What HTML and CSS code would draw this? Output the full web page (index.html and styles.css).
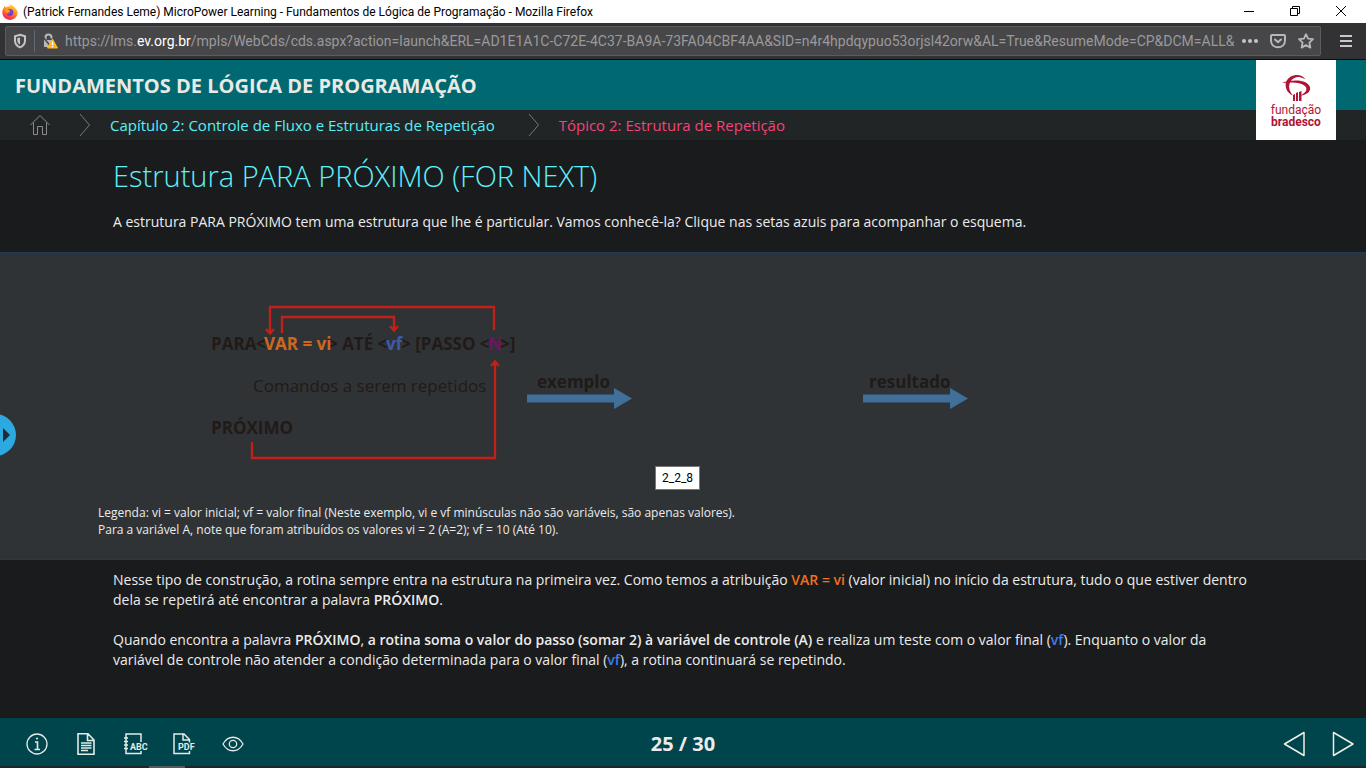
FILE: index.html
```html
<!DOCTYPE html>
<html lang="pt-BR">
<head>
<meta charset="utf-8">
<meta name="viewport" content="width=device-width, initial-scale=1">
<title>Fundamentos de Lógica de Programação</title>
<link rel="stylesheet" href="styles.css">
</head>
<body>
<div class="titlebar">
  <svg class="firefox" viewBox="0 0 16 16" aria-hidden="true">
    <defs>
      <linearGradient id="flame" x1="0.8" y1="0" x2="0.3" y2="1"><stop offset="0" stop-color="#ffe03a"/><stop offset=".4" stop-color="#ff9a1f"/><stop offset=".75" stop-color="#ff4a3d"/><stop offset="1" stop-color="#e3236f"/></linearGradient>
    </defs>
    <path d="M8 2.2 9 0.3C10 2 12 2.6 13.4 4.2 15 5.8 15.9 7.4 15.6 9.6 15 13.4 12 15.9 8.2 15.9 4 15.9 .5 13 .3 8.8.2 6.8.8 5 1.8 3.9L2.3 1.8 3.8 3.4C5 2.6 6.500 2.200 8 2.200Z" fill="url(#flame)"/>
    <path d="M5 6.200C6 4.800 8.500 4.500 10 5.600 12 7 11.900 10.200 9.800 11.500 7.800 12.600 5.300 11.800 4.600 10.200L7.500 8.600 8.300 7.300Z" fill="#7b3fd0"/>
    <path d="M3.200 5.400C5 4.500 6 5.800 7.900 6.100 7.700 7.700 5.800 7.400 5.300 9 4 8.500 3.100 7 3.200 5.400Z" fill="#ff9d25"/>
  </svg>
  <span class="window-title">(Patrick Fernandes Leme) MicroPower Learning - Fundamentos de Lógica de Programação - Mozilla Firefox</span>
  <div class="window-controls">
    <button type="button" aria-label="Minimizar"><svg viewBox="0 0 12 12"><path d="M1 6.500H11"/></svg></button>
    <button type="button" aria-label="Restaurar"><svg viewBox="0 0 12 12"><path d="M1.500 3.500H8.500V10.500H1.500ZM3.500 3.500V1.500H10.500V8.500H8.500"/></svg></button>
    <button type="button" aria-label="Fechar"><svg viewBox="0 0 12 12"><path d="M1 1 11 11M11 1 1 11"/></svg></button>
  </div>
</div>

<div class="toolbar">
  <div class="address">
    <button type="button" class="tool shield" aria-label="Proteção"><svg viewBox="0 0 16 16"><path d="M8 1.800 13 3.200V7.500C13 11 10.800 13.300 8 14.400 5.200 13.300 3 11 3 7.500V3.200Z" fill="none" stroke="#c4c4c6" stroke-width="2"/><path d="M8 4.500V11.800C6.300 10.900 5.300 9.400 5.300 7.500V5.100Z" fill="#c4c4c6"/></svg></button>
    <button type="button" class="tool lock" aria-label="Conexão"><svg viewBox="0 0 16 16"><path d="M3.500 8V4.500C3.500 .5 9.500 .5 9.500 4.500V5.500" fill="none" stroke="#b8b8ba" stroke-width="2"/><path d="M2 7H11V14H2Z" fill="#b8b8ba"/><path d="M1 4 10 15" stroke="#474749" stroke-width="1.500"/><path d="M10.500 6 15.500 15H5.500Z" fill="#ffb51c" stroke="#ffb51c" stroke-linejoin="round"/><path d="M10.500 8.500V12M10.500 13V14.300" stroke="#fff" stroke-width="1.400"/></svg></button>
    <div class="url" role="textbox" aria-label="Endereço" contenteditable="true" spellcheck="false">https://lms.<b>ev.org.br</b>/mpls/WebCds/cds.aspx?action=launch&amp;ERL=AD1E1A1C-C72E-4C37-BA9A-73FA04CBF4AA&amp;SID=n4r4hpdqypuo53orjsl42orw&amp;AL=True&amp;ResumeMode=CP&amp;DCM=ALL&amp;</div>
    <button type="button" class="tool" aria-label="Ações da página"><svg viewBox="0 0 16 16" fill="#c4c4c6"><circle cx="2" cy="8" r="2"/><circle cx="8" cy="8" r="2"/><circle cx="14" cy="8" r="2"/></svg></button>
    <button type="button" class="tool" aria-label="Pocket"><svg viewBox="0 0 16 16" fill="none" stroke="#b8b8ba" stroke-width="2" stroke-linecap="round" stroke-linejoin="round"><path d="M2 2H14Q15 2 15 3V7.500C15 16.500 1 16.500 1 7.500V3Q1 2 2 2Z"/><path d="M5 6.500 8 9.300 11 6.500"/></svg></button>
    <button type="button" class="tool" aria-label="Favorito"><svg viewBox="0 0 16 16" fill="none" stroke="#b8b8ba" stroke-width="1.800" stroke-linejoin="round"><path d="M8 1.200 10.100 5.700 15 6.200 11.400 9.600 12.400 14.600 8 12.100 3.600 14.600 4.600 9.600 1 6.200 5.900 5.700Z"/></svg></button>
  </div>
  <button type="button" class="tool menu" aria-label="Menu"><svg viewBox="0 0 16 16" stroke="#c8c8ca" stroke-width="2"><path d="M2 3H14M2 8H14M2 13H14"/></svg></button>
</div>

<header class="course">
  <h1>FUNDAMENTOS DE LÓGICA DE PROGRAMAÇÃO</h1>
  <div class="brand">
    <svg viewBox="0 0 30 28" aria-hidden="true">
      <path d="M24.500 5.500C20-1.500 9 0 5.500 7 3 13 6 19 12 21.500 8 17 7 12 9.500 7.500 13 2 19 1.500 24.500 5.500Z" fill="#b01335"/>
      <path d="M1 9C12 5 25 6 28.500 12 31 17 26 21 19.500 21.500 24 19 27 16 24.500 12.500 20 8 10 8 1 9Z" fill="#b01335"/>
      <path d="M12 27V21L14 20V27ZM15 27V19L17 18V27ZM18 27V18L20.500 17V27Z" fill="#b01335"/>
    </svg>
    <span>fundação</span><strong>bradesco</strong>
  </div>
</header>

<nav class="crumbs" aria-label="Navegação">
  <a href="#" class="home" aria-label="Início"><svg viewBox="0 0 20 22" fill="none" stroke="#8b8c8c"><path d="M.5 11 10 1.500 19.500 11M3.500 8.500V20.500H7.500V12.500H12.500V20.500H16.500V8.500"/></svg></a>
  <svg class="chevron" viewBox="0 0 12 22" fill="none" stroke="#777979"><path d="M0 0 9.500 11 0 22"/></svg>
  <a href="#" class="chapter">Capítulo 2: Controle de Fluxo e Estruturas de Repetição</a>
  <svg class="chevron second" viewBox="0 0 12 22" fill="none" stroke="#777979"><path d="M0 0 9.500 11 0 22"/></svg>
  <a href="#" class="topic" aria-current="page">Tópico 2: Estrutura de Repetição</a>
</nav>

<main>
  <section class="intro">
    <h2>Estrutura PARA PRÓXIMO (FOR NEXT)</h2>
    <p>A estrutura PARA PRÓXIMO tem uma estrutura que lhe é particular. Vamos conhecê-la? Clique nas setas azuis para acompanhar o esquema.</p>
  </section>

  <section class="stage">
    <div class="scheme">
      <svg class="loop" viewBox="0 0 316 170" role="img" aria-label="Esquema da estrutura PARA PRÓXIMO">
        <g class="code">
          <text x="0" y="50">PARA&lt;</text>
          <text x="117" y="50">&gt; ATÉ &lt;</text>
          <text x="190" y="50">&gt; [PASSO &lt;</text>
          <text x="289" y="50">&gt;]</text>
          <text x="53" y="50" class="orange">VAR = vi</text>
          <text x="175" y="50" class="blue">vf</text>
          <text x="277" y="50" class="purple">N</text>
          <text x="42" y="92" class="plain">Comandos a serem repetidos</text>
          <text x="0" y="134">PRÓXIMO</text>
        </g>
        <g fill="none" stroke="#c32017" stroke-width="2.300">
          <path d="M283 30V7H59V33M55 29 59 33.500 63 29"/>
          <path d="M71 33V17H183V31M179 26 183 30.500 187 26"/>
          <path d="M41 142V158H284V62M280 66 284 61.500 288 66"/>
        </g>
      </svg>
      <button type="button" class="step">
        <span>exemplo</span>
        <svg viewBox="0 0 105 21"><path d="M0 6.500H87V0L105 10.500 87 21V14.500H0Z" fill="#406f99"/></svg>
      </button>
      <button type="button" class="step result">
        <span>resultado</span>
        <svg viewBox="0 0 105 21"><path d="M0 6.500H87V0L105 10.500 87 21V14.500H0Z" fill="#406f99"/></svg>
      </button>
    </div>
    <p class="legend">Legenda: vi = valor inicial; vf = valor final (Neste exemplo, vi e vf minúsculas não são variáveis, são apenas valores).<br>Para a variável A, note que foram atribuídos os valores vi = 2 (A=2); vf = 10 (Até 10).</p>
    <button type="button" class="drawer" aria-label="Abrir menu"><svg viewBox="0 0 7 14"><path d="M0 0 7 7 0 14Z" fill="#1f2b35"/></svg></button>
    <div class="tooltip" role="tooltip">2_2_8</div>
  </section>

  <section class="explain">
    <p>Nesse tipo de construção, a rotina sempre entra na estrutura na primeira vez. Como temos a atribuição <b class="orange">VAR = vi</b> (valor inicial) no início da estrutura, tudo o que estiver dentro dela se repetirá até encontrar a palavra <b>PRÓXIMO</b>.</p>
    <p>Quando encontra a palavra <b>PRÓXIMO</b>, <b>a rotina soma o valor do passo (somar 2) à variável de controle (A)</b> e realiza um teste com o valor final (<b class="blue">vf</b>). Enquanto o valor da variável de controle não atender a condição determinada para o valor final (<b class="blue">vf</b>), a rotina continuará se repetindo.</p>
  </section>
</main>

<footer class="player">
  <div class="tools">
    <button type="button" aria-label="Informações"><svg viewBox="0 0 22 22" fill="none" stroke="#e3ebe9" stroke-width="1.300"><circle cx="11" cy="11" r="10"/><path d="M9 9H11.500V16M8.500 16.500H14M10 5.500H12" stroke-width="1.600"/></svg></button>
    <button type="button" aria-label="Texto"><svg viewBox="0 0 22 22" fill="none" stroke="#e3ebe9" stroke-width="1.600"><path d="M3 .700H13L19 7V21.300H3ZM12.500 .700V7.500H19M6 10H16.500M6 12.500H16.500M6 15H16.500M6 17.500H13"/></svg></button>
    <button type="button" aria-label="Glossário"><svg viewBox="0 0 22 22" fill="none" stroke="#e3ebe9" stroke-width="1.500"><path d="M17 9V1H2V20.500H17V18M0 5H4M0 8.500H4M0 12H4M0 15.500H4"/><text x="6" y="17" class="tag">ABC</text></svg></button>
    <button type="button" aria-label="PDF"><svg viewBox="0 0 22 22" fill="none" stroke="#e3ebe9" stroke-width="1.500"><path d="M16.500 9.500V6.500L11 1H1V20.500H16.500V18M10 1V7H16.500"/><text x="5" y="17" class="tag">PDF</text></svg></button>
    <button type="button" aria-label="Visualizar"><svg viewBox="0 0 22 22" fill="none" stroke="#e3ebe9" stroke-width="1.300"><path d="M1 11C6 2 16 2 21 11 16 20 6 20 1 11Z"/><circle cx="11" cy="11" r="3.700"/></svg></button>
  </div>
  <div class="count">25 / 30</div>
  <div class="pager">
    <button type="button" aria-label="Anterior"><svg viewBox="0 0 22 26" fill="none" stroke="#f0f0e8" stroke-width="1.500" stroke-linejoin="round"><path d="M21 1.500V24.500L1.500 13Z"/></svg></button>
    <button type="button" aria-label="Próximo"><svg viewBox="0 0 22 26" fill="none" stroke="#f0f0e8" stroke-width="1.500" stroke-linejoin="round"><path d="M1.500 1.500V24.500L21 13Z"/></svg></button>
  </div>
</footer>
<div class="strip"></div>
</body>
</html>
```
FILE: styles.css
```css
* { box-sizing: border-box; }
body {
  margin: 0;
  min-height: 100vh;
  display: flex;
  flex-direction: column;
  background: #1a1b1c;
  color: #ececec;
  font-family: "Open Sans", "Noto Sans", sans-serif;
}
button { padding: 0; border: 0; background: none; color: inherit; font: inherit; }
svg { display: block; overflow: visible; }
p, h1, h2 { margin: 0; }
a { text-decoration: none; }

.titlebar {
  height: 23px;
  display: flex;
  align-items: center;
  gap: 5px;
  padding: 0 2px;
  background: #fff;
  color: #000;
}
.firefox { width: 16px; height: 16px; }
.window-title { flex: 1; font: 12px/16px Roboto, sans-serif; white-space: nowrap; }
.window-controls { display: flex; margin-bottom: 2px; }
.window-controls button { width: 46px; display: grid; place-items: center; }
.window-controls svg { width: 12px; height: 12px; fill: none; stroke: #000; }

.toolbar {
  height: 37px;
  display: flex;
  align-items: center;
  gap: 17px;
  padding: 0 11px 0 5px;
  background: #323234;
  border-bottom: 1px solid #0c0c0d;
}
.address {
  flex: 1;
  min-width: 0;
  height: 30px;
  display: flex;
  align-items: center;
  gap: 12px;
  padding: 0 6px;
  background: #474749;
  border: 1px solid #5c5c5e;
  border-radius: 2px;
}
.tool { width: 16px; height: 16px; flex: none; }
.tool svg { width: 16px; height: 16px; }
.shield { margin-right: -6px; }
.shield + .lock { height: 22px; width: 24px; padding-left: 7px; border-left: 1px solid #5e6a77; }
.lock { display: grid; align-items: center; }
.url {
  flex: 1;
  min-width: 0;
  margin: 0 -6px 0 -5px;
  overflow: hidden;
  white-space: nowrap;
  color: #9a9a9c;
  font: 14px/20px Roboto, sans-serif;
}
.url b { color: #fff; font-weight: 400; }
.menu { margin-right: 1px; }

.course {
  position: relative;
  height: 50px;
  display: flex;
  align-items: center;
  padding: 2px 15px 0;
  background: #006870;
}
.course h1 { font-size: 20px; line-height: 28px; font-weight: 700; color: #e9e9e6; }
.brand {
  position: absolute;
  z-index: 1;
  top: 0;
  right: 30px;
  width: 80px;
  height: 80px;
  padding-top: 14px;
  background: #fff;
  color: #b01335;
  font: 12px/12px Roboto, sans-serif;
  text-align: center;
}
.brand svg { width: 30px; height: 28px; margin: 0 auto 2px; }
.brand span, .brand strong { display: block; }

.crumbs {
  height: 30px;
  display: flex;
  align-items: center;
  padding-left: 30px;
  background: #222526;
  font-size: 15px;
  line-height: 20px;
}
.home svg { width: 20px; height: 22px; }
.chevron { width: 12px; height: 22px; margin: 0 18px 0 30px; }
.second { margin-left: 34px; }
.chapter { color: #57f0fa; }
.topic { color: #f0447a; }

main { flex: 1; }
.intro { height: 112px; padding: 16px 113px 0; }
.intro h2 { font-size: 29px; line-height: 40px; font-weight: 300; color: #5ff1fb; }
.intro p, .explain { font-size: 14px; line-height: 20px; }
.intro p { margin-top: 16px; }

.stage {
  position: relative;
  height: 308px;
  padding: 47px 98px 0;
  background: #303335;
  border-top: 1px solid #1f3b58;
  border-bottom: 1px solid #1f3b58;
}
.scheme { display: flex; padding-left: 113px; height: 170px; }
.loop { width: 316px; height: 170px; flex: none; }
.code { font-size: 17px; font-weight: 700; fill: #211a18; }
.code .plain { font-weight: 400; }
.code .orange { fill: #cd6820; }
.code .blue { fill: #3a5ca8; }
.code .purple { fill: #6d1464; }
.step { width: 105px; height: 38px; margin-top: 71px; font-size: 17px; line-height: 22px; font-weight: 700; color: #211a18; text-align: left; }
.step span { display: block; height: 17px; padding-left: 10px; }
.step svg { width: 105px; height: 21px; }
.result { margin-left: 231px; }
.result span { padding-left: 6px; }
.legend { margin-top: 34px; font-size: 12px; line-height: 17px; }
.drawer {
  position: absolute;
  left: -26px;
  top: 161px;
  width: 42px;
  height: 42px;
  padding-left: 29px;
  border-radius: 50%;
  background: #2da9e1;
}
.drawer svg { width: 7px; height: 14px; }
.tooltip {
  position: absolute;
  left: 655px;
  top: 213px;
  padding: 2px 6px;
  border: 1px solid #767676;
  background: #fff;
  color: #000;
  font: 12px/18px Roboto, sans-serif;
}
.explain { padding: 10px 113px 20px; }
.explain p + p { margin-top: 20px; }
.explain b { font-weight: 600; }
.explain .orange { color: #f37021; }
.explain .blue { color: #3f7df0; }

.player {
  height: 48px;
  display: grid;
  grid-template-columns: 1fr auto 1fr;
  align-items: center;
  padding: 4px 12px 0;
  background: #00444c;
}
.tools { display: flex; gap: 27px; padding-left: 14px; }
.tools svg { width: 22px; height: 22px; }
.tag { font: 700 9px Roboto, sans-serif; fill: #e3ebe9; stroke: none; }
.count { font-size: 20px; line-height: 26px; font-weight: 700; }
.pager { display: flex; justify-content: flex-end; gap: 27px; }
.pager svg { width: 22px; height: 26px; }
.strip { height: 2px; background: linear-gradient(90deg, #1d2628 149px, #555b5d 149px, #555b5d 185px, #1d2628 185px); }
```
